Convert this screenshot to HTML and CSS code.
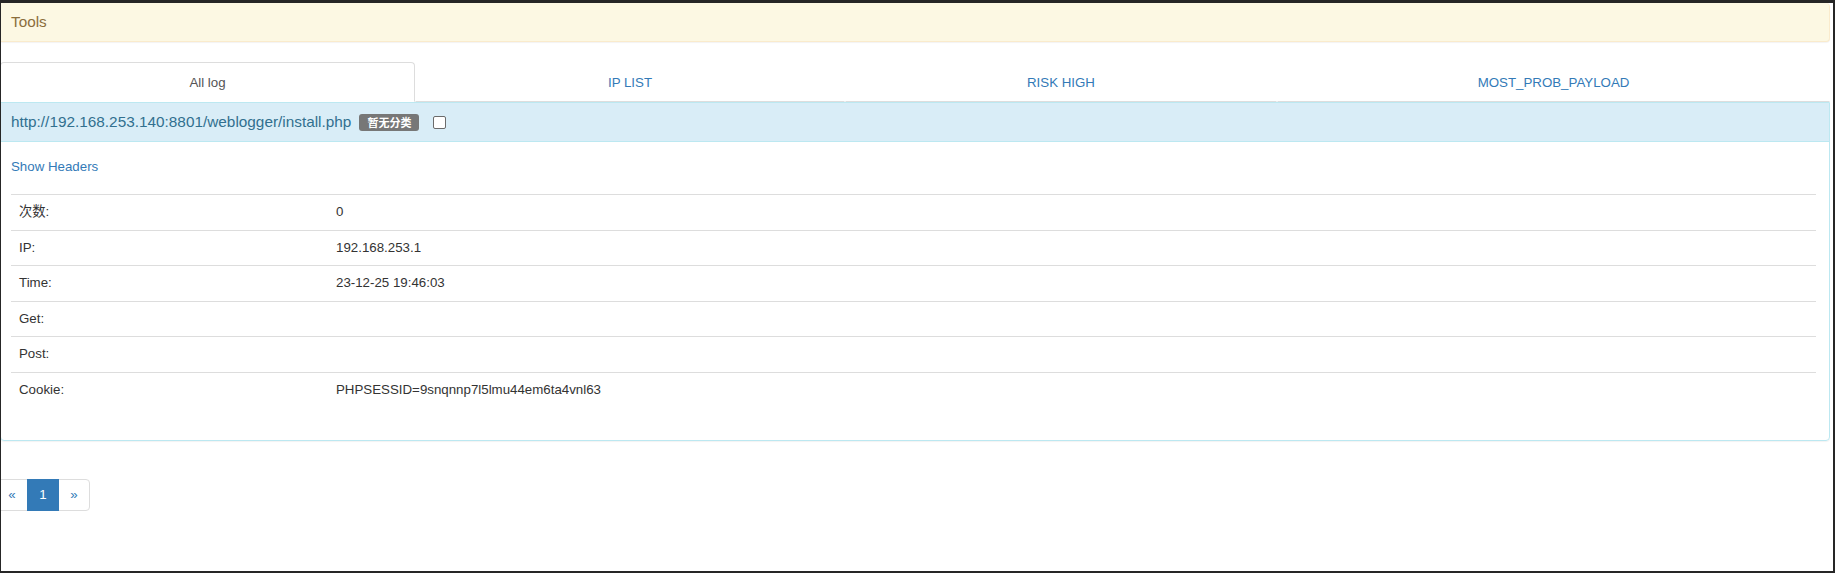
FILE: index.html
```html
<!DOCTYPE html>
<html lang="zh">
<head>
<meta charset="utf-8">
<title>Tools</title>
<link rel="stylesheet" href="styles.css">
</head>
<body>
<div class="page">
  <div class="tools">
    <div class="tools-title">Tools</div>
  </div>

  <div class="tabs">
    <div class="tab active">All log</div>
    <div class="tab">IP LIST</div>
    <div class="tab">RISK HIGH</div>
    <div class="tab">MOST_PROB_PAYLOAD</div>
  </div>

  <div class="info-panel">
    <div class="info-heading">
      <a class="url">http://192.168.253.140:8801/weblogger/install.php</a>
      <span class="badge">暂无分类</span>
      <span class="check"></span>
    </div>
    <div class="info-body">
      <a class="show-headers">Show Headers</a>
      <table class="detail">
        <tr><td class="label">次数:</td><td>0</td></tr>
        <tr><td class="label">IP:</td><td>192.168.253.1</td></tr>
        <tr><td class="label">Time:</td><td>23-12-25 19:46:03</td></tr>
        <tr><td class="label">Get:</td><td></td></tr>
        <tr><td class="label">Post:</td><td></td></tr>
        <tr><td class="label">Cookie:</td><td>PHPSESSID=9snqnnp7l5lmu44em6ta4vnl63</td></tr>
      </table>
    </div>
  </div>

  <div class="pagination">
    <span class="pg first">&laquo;</span>
    <span class="pg current">1</span>
    <span class="pg last">&raquo;</span>
  </div>
</div>
</body>
</html>
```

FILE: styles.css
```css
html, body {
  margin: 0;
  padding: 0;
  background: #262626;
  height: 573px;
  overflow: hidden;
}

.page {
  margin: 3px 2px 0 1px;
  height: 568px;
  background: #ffffff;
  overflow: hidden;
  font-family: "Liberation Sans", Arial, "Noto Sans CJK SC", sans-serif;
  font-size: 13.3px;
  color: #333333;
}

.tools {
  width: 1829px;
  height: 39px;
  box-sizing: border-box;
  background: #fcf8e3;
  border: 1px solid #faebcc;
  border-left: none;
  border-top: none;
  border-radius: 0 4px 4px 0;
  box-shadow: 0 1px 1px rgba(0, 0, 0, 0.05);
}

.tools-title {
  padding-left: 10px;
  line-height: 37px;
  font-size: 15.3px;
  color: #8a6d3b;
}

.tabs {
  margin-top: 20px;
  margin-left: -1px;
  width: 1830px;
  display: grid;
  grid-template-columns: 415px 430px 432px 1fr;
}

.tab {
  height: 40px;
  box-sizing: border-box;
  border: 1px solid transparent;
  border-bottom-color: #dddddd;
  padding-top: 1px;
  text-align: center;
  line-height: 38px;
  color: #337ab7;
}

.tab.active {
  border-color: #dddddd #dddddd transparent #dddddd;
  border-radius: 4px 4px 0 0;
  color: #555555;
}

.info-panel {
  margin-left: -1px;
  width: 1830px;
  box-sizing: border-box;
  border: 1px solid #bce8f1;
  border-radius: 0 0 4px 4px;
  box-shadow: 0 1px 1px rgba(0, 0, 0, 0.05);
}

.info-heading {
  height: 39px;
  box-sizing: border-box;
  background: #d9edf7;
  border-bottom: 1px solid #bce8f1;
  padding-left: 10px;
  display: flex;
  align-items: center;
}

.url {
  font-size: 15.35px;
  color: #31708f;
}

.badge {
  margin-left: 8px;
  height: 17px;
  padding: 0 8px;
  box-sizing: border-box;
  background: #777777;
  color: #ffffff;
  border-radius: 3px;
  font-family: "Noto Sans CJK SC", sans-serif;
  font-weight: 700;
  font-size: 11px;
  line-height: 17px;
}

.check {
  margin-left: 14px;
  width: 13px;
  height: 13px;
  box-sizing: border-box;
  border: 1px solid #6b6b6b;
  border-radius: 2px;
  background: #ffffff;
}

.info-body {
  padding: 15px 13px 13px 10px;
}

.show-headers {
  display: block;
  line-height: 19px;
  color: #337ab7;
  margin-bottom: 18px;
}

.detail {
  width: 100%;
  border-collapse: collapse;
  margin-bottom: 20px;
}

.detail td {
  border-top: 1px solid #dddddd;
  padding: 8px;
  line-height: 18.5px;
  height: 18.5px;
  vertical-align: top;
}

.detail td.label {
  width: 301px;
}

.pagination {
  margin-top: 38px;
  margin-left: -5px;
  display: flex;
}

.pg {
  width: 32px;
  height: 32px;
  box-sizing: border-box;
  border: 1px solid #dddddd;
  margin-left: -1px;
  text-align: center;
  line-height: 30px;
  color: #337ab7;
  background: #ffffff;
}

.pg.first {
  margin-left: 0;
  border-radius: 4px 0 0 4px;
}

.pg.current {
  background: #337ab7;
  border-color: #337ab7;
  color: #ffffff;
  position: relative;
}

.pg.last {
  border-radius: 0 4px 4px 0;
}
```
